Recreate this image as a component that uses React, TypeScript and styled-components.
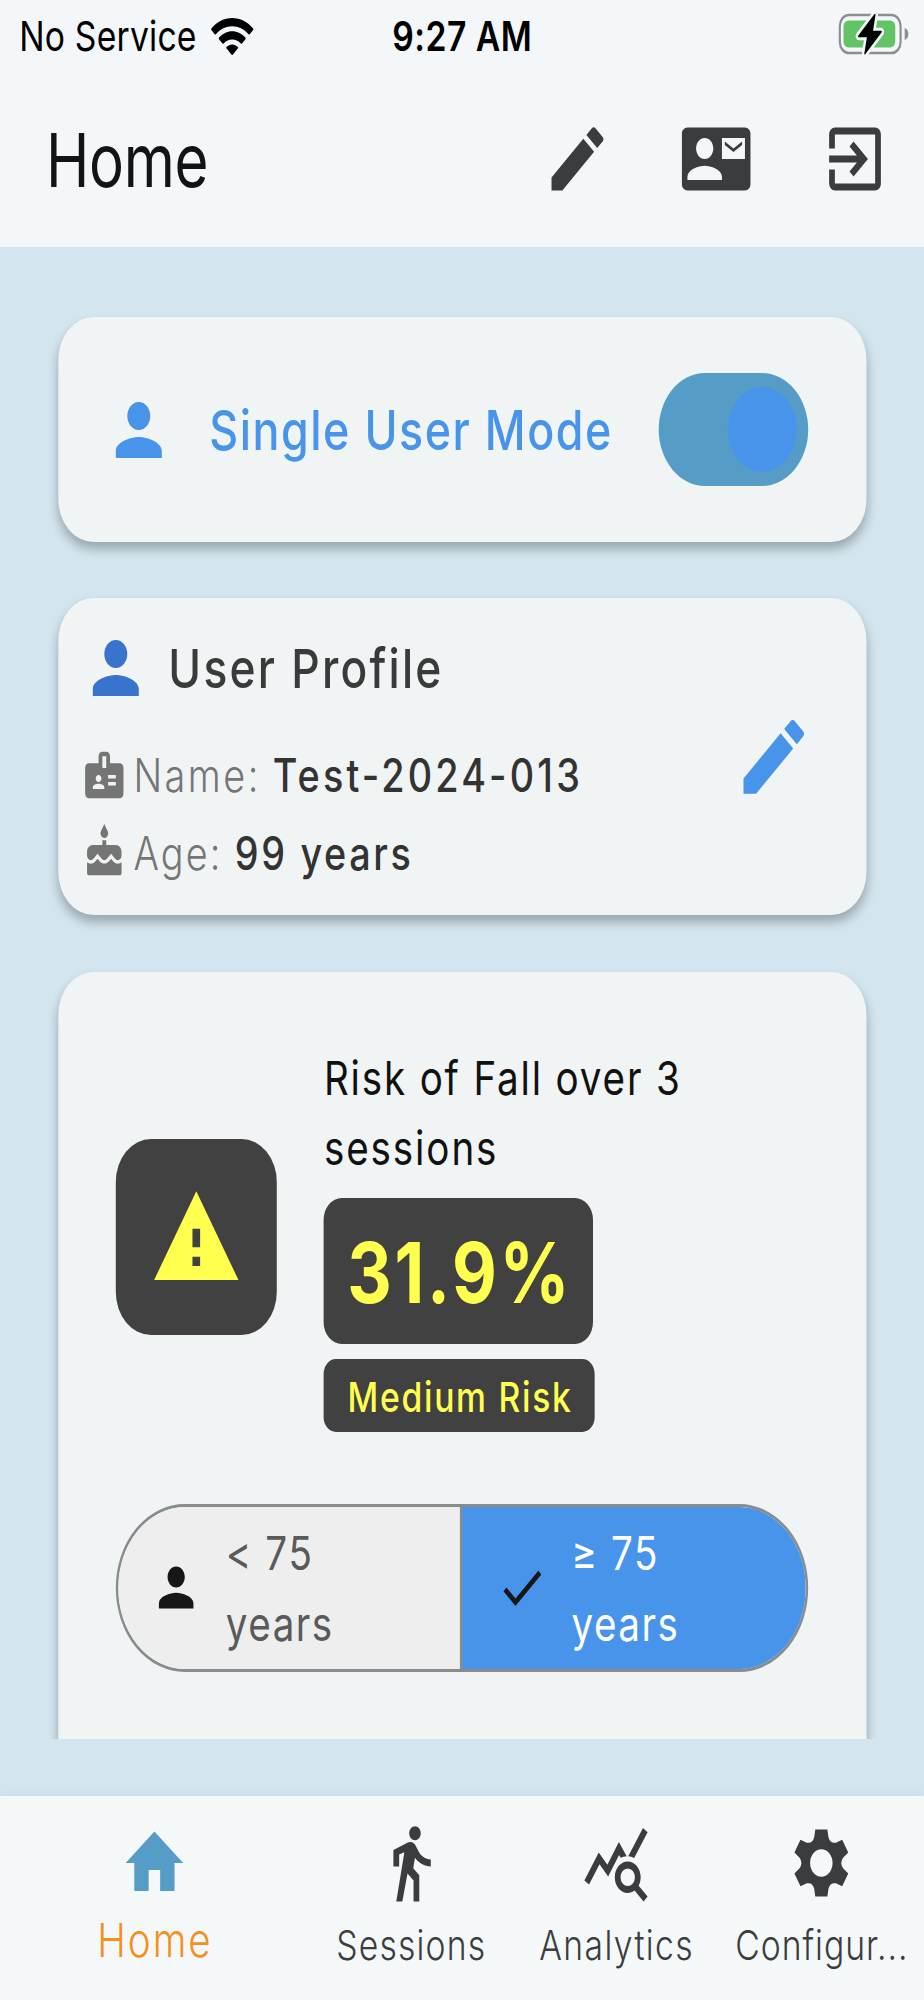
import React from 'react';
import styled, { createGlobalStyle } from 'styled-components';
import {
  MdEdit, MdContactMail, MdExitToApp, MdPerson, MdBadge, MdCake, MdWarning,
  MdCheck, MdHome, MdDirectionsWalk, MdQueryStats,
} from 'react-icons/md';

const GlobalStyle = createGlobalStyle`
  html, body { margin: 0; padding: 0; background: #d3e5ef; overflow: hidden; }
  * { box-sizing: border-box; }
  svg { display: block; flex: none; }
`;

const Viewport = styled.div`
  width: 924px;
  height: 2000px;
  overflow: hidden;
`;

/* The screen is laid out on a 1125px wide grid and squeezed to the viewport. */
const Screen = styled.div`
  width: 1125px;
  height: 2000px;
  display: flex;
  flex-direction: column;
  transform: scaleX(0.82133);
  transform-origin: 0 0;
  background: #d3e5ef;
  font-family: Inter, 'Liberation Sans', sans-serif;
  color: #3b3c3e;
`;

/* The negative margin drops the tracking after the last letter, so centring stays true. */
const Label = styled.span<{ $size: number; $weight?: number; $color?: string; $track?: number; $line?: number }>`
  display: block;
  white-space: nowrap;
  font-size: ${p => p.$size}px;
  font-weight: ${p => p.$weight ?? 400};
  color: ${p => p.$color ?? 'inherit'};
  letter-spacing: ${p => p.$track ?? 0}px;
  margin-right: ${p => -(p.$track ?? 0)}px;
  line-height: ${p => (p.$line ? `${p.$line}px` : 1.2)};
  transform: translateY(1px);
`;

const StatusBar = styled.div`
  flex: none;
  height: 72px;
  display: grid;
  grid-template-columns: 1fr auto 1fr;
  align-items: center;
  background: #f3f7fa;
  color: #000;
`;
const StatusLeft = styled.div`
  display: flex;
  align-items: center;
  gap: 18px;
  padding-left: 23.4px;
`;
const StatusRight = styled.div`
  display: flex;
  justify-content: flex-end;
  padding-right: 19px;
`;

const Header = styled.header`
  flex: none;
  height: 174.5px;
  display: flex;
  align-items: center;
  background: #f3f7fa;
  color: #3b3c3e;
`;
const Title = styled.div`
  flex: 1;
  padding-left: 55.5px;
`;
/* The page title is set slightly condensed. */
const TitleLabel = styled(Label)`
  transform: translateY(1px) scaleX(0.96);
  transform-origin: 0 50%;
`;
const HeaderButton = styled.div`
  width: 168.7px;
  display: flex;
  justify-content: center;
`;

const Main = styled.main`
  flex: none;
  height: 1549px;
  padding: 0 56px 56.5px;
`;
const Scroller = styled.div`
  height: 100%;
  overflow: hidden;
  padding: 70.5px 14.5px 0;
  display: flex;
  flex-direction: column;
  gap: 56.2px;
`;
const Card = styled.section<{ $h: number }>`
  flex: none;
  height: ${p => p.$h}px;
  border-radius: 43px;
  background: #f0f4f5;
  box-shadow: 0 7px 12px rgba(0, 0, 0, 0.28);
`;
const ModeCard = styled(Card)`
  display: flex;
  align-items: center;
  padding: 0 70.4px 0 56.3px;
  color: #4894ea;
`;
const ModeLabel = styled.div`
  flex: 1;
  padding-left: 44px;
`;
const Toggle = styled.div`
  width: 182.6px;
  height: 112.4px;
  border-radius: 57px;
  background: #559cc6;
  display: flex;
  align-items: center;
  justify-content: flex-end;
  padding-right: 14px;
`;
const Thumb = styled.div`
  width: 84.4px;
  height: 84.4px;
  border-radius: 50%;
  background: #4894ea;
`;

const ProfileCard = styled(Card)`
  display: flex;
  align-items: center;
  justify-content: space-between;
  padding: 0 63.8px 0 28px;
  color: #4894ea;
`;
const ProfileInfo = styled.div`
  align-self: flex-start;
  padding-top: 28px;
`;
const ProfileHead = styled.div`
  display: flex;
  align-items: center;
  gap: 22.5px;
  height: 84px;
  margin-bottom: 26px;
  color: #3874cd;
`;
const Field = styled.div`
  display: flex;
  align-items: center;
  gap: 8px;
  height: 77.2px;
  color: #757575;
`;
const FieldValue = styled.div<{ $indent: number }>`
  margin-left: ${p => p.$indent}px;
`;

const RiskCard = styled(Card)`
  padding: 70.7px 70.9px 0;
`;
const RiskTop = styled.div`
  display: flex;
  align-items: center;
  gap: 57px;
`;
const WarnBox = styled.div`
  width: 196px;
  height: 196px;
  border-radius: 43px;
  padding-top: 2px;
  display: flex;
  align-items: center;
  justify-content: center;
  background: #414141;
  color: #ffff50;
`;
const Badge = styled.div<{ $w: number; $h: number; $r: number; $drop?: number }>`
  width: ${p => p.$w}px;
  height: ${p => p.$h}px;
  border-radius: ${p => p.$r}px;
  margin-top: 15.2px;
  padding-top: ${p => p.$drop ?? 2}px;
  display: flex;
  align-items: center;
  justify-content: center;
  background: #414141;
`;
const Segments = styled.div`
  margin-top: 71.3px;
  height: 168.6px;
  border: 3px solid #888c8c;
  border-radius: 85px;
  overflow: hidden;
  display: flex;
`;
const Segment = styled.div<{ $on?: boolean }>`
  flex: 1;
  display: flex;
  align-items: center;
  gap: 28.6px;
  padding-left: ${p => (p.$on ? 41.5 : 39)}px;
  background: ${p => (p.$on ? '#4894ea' : '#eeeeee')};
  border-left: ${p => (p.$on ? '3px solid #888c8c' : '0')};
  color: #151719;
`;

const Nav = styled.nav`
  flex: 1;
  display: flex;
  background: #f4f8f9;
  box-shadow: 0 -2px 8px rgba(0, 0, 0, 0.04);
`;
const NavItem = styled.div<{ $w: number }>`
  width: ${p => p.$w}px;
  padding-top: 25px;
  display: flex;
  flex-direction: column;
  align-items: center;
`;

const WifiIcon = () => (
  <svg width="51.5" height="38" viewBox="0 -1 51.5 38">
    <path d="M25.7 0C35.5 0 44.5 3.8 51.2 10.6C51.6 11 51.6 11.6 51.2 12L47 16.3C46.6 16.7 46 16.7 45.6 16.3C40.3 11 33.3 8.2 25.7 8.2S11.1 11 5.8 16.3C5.4 16.7 4.8 16.7 4.4 16.3L.3 12C-.1 11.6-.1 11 .3 10.6C7 3.8 15.9 0 25.7 0Z" />
    <path d="M25.7 13.3C31.9 13.3 37.6 15.7 41.9 19.8C42.3 20.2 42.3 20.8 41.9 21.2L37.6 25.5C37.2 25.9 36.6 25.9 36.2 25.5C33.4 22.9 29.7 21.4 25.7 21.4S18.1 22.9 15.3 25.5C14.9 25.9 14.3 25.9 13.9 25.5L9.6 21.2C9.2 20.8 9.2 20.2 9.6 19.8C13.9 15.7 19.5 13.3 25.7 13.3Z" />
    <path d="M25.7 26.4C28.3 26.4 30.7 27.3 32.6 28.9C33.1 29.3 33.1 29.9 32.7 30.3L26.4 36.7C26 37.1 25.4 37.1 25 36.7L18.7 30.3C18.3 29.9 18.3 29.3 18.8 28.9C20.7 27.3 23.1 26.4 25.7 26.4Z" />
  </svg>
);

const BatteryIcon = () => (
  <svg width="85" height="42" viewBox="0 2 85 42" overflow="visible">
    <rect x="1.5" y="2" width="74" height="38" rx="11" fill="none" stroke="#8b8f92" strokeWidth="2.6" />
    <rect x="6" y="7.5" width="63" height="27" rx="6" fill="#62c466" />
    <path d="M80.5 15c3 1 4.5 3.2 4.5 6s-1.5 5-4.5 6z" fill="#8b8f92" />
    <path d="M43.5 1.2L24 22.5c-.6.8-.2 1.8.8 1.8h9.7L31.3 40.5c-.2 1.2.6 1.5 1.4.6L52.3 19.6c.6-.8.2-1.800-.8-1.800H42l3-16c.2-1.200-.7-1.500-1.500-.6z" fill="#000" stroke="#f3f7fa" strokeWidth="6" paintOrder="stroke" />
  </svg>
);

/* Six-toothed gear built tooth by tooth around the centre. */
const gearPoint = (deg: number, along: number, across: number) => {
  const a = (deg * Math.PI) / 180;
  return `${(12 + Math.cos(a) * along - Math.sin(a) * across).toFixed(2)} ${(12 + Math.sin(a) * along + Math.cos(a) * across).toFixed(2)}`;
};
const gearPath = [0, 1, 2, 3, 4, 5]
  .map(i => {
    const d = -90 + i * 60;
    return `${i ? 'L' : 'M'}${gearPoint(d, 7.3, -2.5)}L${gearPoint(d, 9.6, -2.1)}L${gearPoint(d, 9.6, 2.1)}L${gearPoint(d, 7.3, 2.5)}Q${gearPoint(d + 30, 6.3, 0)} ${gearPoint(d + 60, 7.3, -2.5)}`;
  })
  .join('');
const GearIcon = () => (
  <svg width="84" height="84" viewBox="0 0 24 24" fill="currentColor" fillRule="evenodd">
    <path d={`${gearPath}ZM12 8.1a3.9 3.9 0 100 7.8 3.9 3.9 0 000-7.8Z`} />
  </svg>
);

export default function App() {
  return (
    <Viewport>
      <GlobalStyle />
      <Screen>
        <StatusBar>
          <StatusLeft>
            <Label $size={41} $track={0.25}>No Service</Label>
            <WifiIcon />
          </StatusLeft>
          <Label $size={41} $weight={600} $track={0.6}>9:27 AM</Label>
          <StatusRight><BatteryIcon /></StatusRight>
        </StatusBar>
        <Header>
          <Title><TitleLabel $size={74} $track={-0.4} $color="#111315">Home</TitleLabel></Title>
          <HeaderButton><MdEdit size={84} /></HeaderButton>
          <HeaderButton><MdContactMail size={84} /></HeaderButton>
          <HeaderButton><MdExitToApp size={84} /></HeaderButton>
        </Header>
        <Main>
          <Scroller>
            <ModeCard $h={225.3}>
              <MdPerson size={84} />
              <ModeLabel><Label $size={54.5} $weight={500} $track={1.87}>Single User Mode</Label></ModeLabel>
              <Toggle><Thumb /></Toggle>
            </ModeCard>
            <ProfileCard $h={317}>
              <ProfileInfo>
                <ProfileHead>
                  <MdPerson size={84} />
                  <Label $size={54} $weight={500} $track={2.7} $color="#3a3a3b">User Profile</Label>
                </ProfileHead>
                <Field>
                  <MdBadge size={56} />
                  <Label $size={46} $weight={300} $track={3}>Name:</Label>
                  <FieldValue $indent={9.5}><Label $size={46} $weight={500} $track={3.86} $color="#333">Test-2024-013</Label></FieldValue>
                </Field>
                <Field>
                  <MdCake size={56} />
                  <Label $size={46} $weight={300} $track={2.6}>Age:</Label>
                  <FieldValue $indent={9.5}><Label $size={46} $weight={500} $track={3.2} $color="#333">99 years</Label></FieldValue>
                </Field>
              </ProfileInfo>
              <MdEdit size={98} />
            </ProfileCard>
            <RiskCard $h={900}>
              <RiskTop>
                <WarnBox><MdWarning size={112} /></WarnBox>
                <div>
                  <Label $size={47} $line={70} $track={2.22} $color="#111">Risk of Fall over 3</Label>
                  <Label $size={47} $line={70} $track={2.3} $color="#111">sessions</Label>
                  <Badge $w={327.5} $h={146.5} $r={22} $drop={4}>
                    <Label $size={84} $weight={700} $track={3.3} $color="#ffff50">31.9%</Label>
                  </Badge>
                  <Badge $w={329.3} $h={73} $r={15}>
                    <Label $size={41} $weight={500} $track={2.09} $color="#ffff50">Medium Risk</Label>
                  </Badge>
                </div>
              </RiskTop>
              <Segments>
                <Segment>
                  <MdPerson size={63} />
                  <div>
                    <Label $size={47} $line={70.5} $track={1.9} $color="#5a5a5a">&lt; 75</Label>
                    <Label $size={47} $line={70.5} $track={1.8} $color="#5a5a5a">years</Label>
                  </div>
                </Segment>
                <Segment $on>
                  <MdCheck size={63} />
                  <div>
                    <Label $size={47} $line={70.5} $track={1.9} $color="#fff">≥ 75</Label>
                    <Label $size={47} $line={70.5} $track={1.8} $color="#fff">years</Label>
                  </div>
                </Segment>
              </Segments>
            </RiskCard>
          </Scroller>
        </Main>
        <Nav>
          <NavItem $w={375}>
            <MdHome size={84} color="#559cc6" />
            <Label $size={47} $weight={300} $line={68} $track={2.4} $color="#f4911c">Home</Label>
          </NavItem>
          <NavItem $w={250}>
            <MdDirectionsWalk size={84} />
            <Label $size={41} $weight={300} $line={78} $track={1.45}>Sessions</Label>
          </NavItem>
          <NavItem $w={250}>
            <MdQueryStats size={84} />
            <Label $size={41} $weight={300} $line={78} $track={1.7}>Analytics</Label>
          </NavItem>
          <NavItem $w={250}>
            <GearIcon />
            <Label $size={41} $weight={300} $line={78} $track={1.2}>Configur...</Label>
          </NavItem>
        </Nav>
      </Screen>
    </Viewport>
  );
}
